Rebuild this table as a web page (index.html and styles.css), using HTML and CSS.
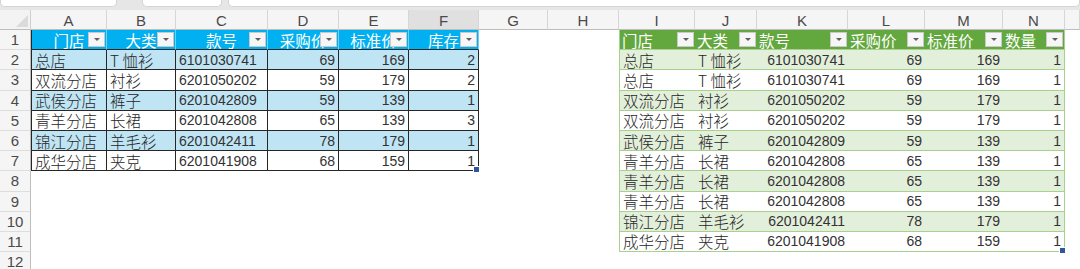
FILE: index.html
```html
<!DOCTYPE html>
<html lang="zh">
<head>
<meta charset="utf-8">
<title>Sheet</title>
<link rel="stylesheet" href="styles.css">
</head>
<body>
<div class="topbar"><div class="tb tb1"></div><div class="tb tb2"></div><div class="tb tb3"></div></div>
<div class="sheet">
  <div class="corner"></div>
  <div class="ch">A</div><div class="ch">B</div><div class="ch">C</div><div class="ch">D</div><div class="ch">E</div><div class="ch sel">F</div><div class="ch">G</div><div class="ch">H</div><div class="ch">I</div><div class="ch">J</div><div class="ch">K</div><div class="ch">L</div><div class="ch">M</div><div class="ch">N</div><div class="ch"></div>
  <div class="rh">1</div><div class="rh">2</div><div class="rh">3</div><div class="rh">4</div><div class="rh">5</div><div class="rh">6</div><div class="rh">7</div><div class="rh">8</div><div class="rh">9</div><div class="rh">10</div><div class="rh">11</div><div class="rh">12</div>

  <div class="tbl blue">
    <div class="row hrow">
      <div class="hd">门店<i class="fb"></i></div>
      <div class="hd">大类<i class="fb"></i></div>
      <div class="hd">款号<i class="fb"></i></div>
      <div class="hd">采购价<i class="fb"></i></div>
      <div class="hd">标准价<i class="fb"></i></div>
      <div class="hd">库存<i class="fb"></i></div>
    </div>
    <div class="row band"><div class="c t">总店</div><div class="c t">T 恤衫</div><div class="c d">6101030741</div><div class="c n">69</div><div class="c n">169</div><div class="c n">2</div></div>
    <div class="row"><div class="c t">双流分店</div><div class="c t">衬衫</div><div class="c d">6201050202</div><div class="c n">59</div><div class="c n">179</div><div class="c n">2</div></div>
    <div class="row band"><div class="c t">武侯分店</div><div class="c t">裤子</div><div class="c d">6201042809</div><div class="c n">59</div><div class="c n">139</div><div class="c n">1</div></div>
    <div class="row"><div class="c t">青羊分店</div><div class="c t">长裙</div><div class="c d">6201042808</div><div class="c n">65</div><div class="c n">139</div><div class="c n">3</div></div>
    <div class="row band"><div class="c t">锦江分店</div><div class="c t">羊毛衫</div><div class="c d">6201042411</div><div class="c n">78</div><div class="c n">179</div><div class="c n">1</div></div>
    <div class="row"><div class="c t">成华分店</div><div class="c t">夹克</div><div class="c d">6201041908</div><div class="c n">68</div><div class="c n">159</div><div class="c n fh">1</div></div>
  </div>

  <div class="tbl green">
    <div class="row hrow">
      <div class="hd">门店<i class="fb"></i></div>
      <div class="hd">大类<i class="fb"></i></div>
      <div class="hd">款号<i class="fb"></i></div>
      <div class="hd">采购价<i class="fb"></i></div>
      <div class="hd">标准价<i class="fb"></i></div>
      <div class="hd">数量<i class="fb"></i></div>
    </div>
    <div class="row band"><div class="c t">总店</div><div class="c t">T 恤衫</div><div class="c n">6101030741</div><div class="c n">69</div><div class="c n">169</div><div class="c n">1</div></div>
    <div class="row"><div class="c t">总店</div><div class="c t">T 恤衫</div><div class="c n">6101030741</div><div class="c n">69</div><div class="c n">169</div><div class="c n">1</div></div>
    <div class="row band"><div class="c t">双流分店</div><div class="c t">衬衫</div><div class="c n">6201050202</div><div class="c n">59</div><div class="c n">179</div><div class="c n">1</div></div>
    <div class="row"><div class="c t">双流分店</div><div class="c t">衬衫</div><div class="c n">6201050202</div><div class="c n">59</div><div class="c n">179</div><div class="c n">1</div></div>
    <div class="row band"><div class="c t">武侯分店</div><div class="c t">裤子</div><div class="c n">6201042809</div><div class="c n">59</div><div class="c n">139</div><div class="c n">1</div></div>
    <div class="row"><div class="c t">青羊分店</div><div class="c t">长裙</div><div class="c n">6201042808</div><div class="c n">65</div><div class="c n">139</div><div class="c n">1</div></div>
    <div class="row band"><div class="c t">青羊分店</div><div class="c t">长裙</div><div class="c n">6201042808</div><div class="c n">65</div><div class="c n">139</div><div class="c n">1</div></div>
    <div class="row"><div class="c t">青羊分店</div><div class="c t">长裙</div><div class="c n">6201042808</div><div class="c n">65</div><div class="c n">139</div><div class="c n">1</div></div>
    <div class="row band"><div class="c t">锦江分店</div><div class="c t">羊毛衫</div><div class="c n">6201042411</div><div class="c n">78</div><div class="c n">179</div><div class="c n">1</div></div>
    <div class="row"><div class="c t">成华分店</div><div class="c t">夹克</div><div class="c n">6201041908</div><div class="c n">68</div><div class="c n">159</div><div class="c n fh">1</div></div>
  </div>
</div>
</body>
</html>
```

FILE: styles.css
```css
html, body {
  margin: 0;
  padding: 0;
}
body {
  width: 1080px;
  height: 269px;
  overflow: hidden;
  background: #ffffff;
  font-family: "Liberation Sans", "Noto Sans CJK SC", sans-serif;
  color: #222222;
}

.topbar {
  height: 10px;
  background: #e6e6e6;
  display: flex;
  align-items: flex-start;
}
.tb {
  height: 7px;
  background: #ffffff;
  border: 1px solid #d4d4d4;
  border-top: none;
  border-radius: 0 0 5px 5px;
  box-sizing: border-box;
}
.tb1 { width: 117px; }
.tb2 { width: 80px; margin-left: 25px; }
.tb3 { flex: 1; margin-left: 6px; }

.sheet {
  display: grid;
  grid-template-columns: 31px 76px 69px 92px 71px 70px 70px 69px 71px 76px 62px 91px 77px 78px 62px 1fr;
  grid-template-rows: 20px repeat(12, 20.2px);
}

.corner {
  grid-row: 1;
  grid-column: 1;
  background: #f3f3f3;
  border-right: 1px solid #cfcfcf;
  border-bottom: 1px solid #bdbdbd;
  box-sizing: border-box;
  position: relative;
}
.corner::after {
  content: "";
  position: absolute;
  right: 2px;
  bottom: 2px;
  border-left: 12px solid transparent;
  border-bottom: 12px solid #dadada;
}

.ch {
  grid-row: 1;
  background: #f5f5f5;
  border-right: 1px solid #d6d6d6;
  border-bottom: 1px solid #bdbdbd;
  box-sizing: border-box;
  display: flex;
  align-items: center;
  justify-content: center;
  font-size: 15px;
  color: #4a4a4a;
  padding-top: 1px;
}
.ch.sel { background: #e0e0e0; }

.rh {
  grid-column: 1;
  background: #f5f5f5;
  border-right: 1px solid #bdbdbd;
  border-bottom: 1px solid #dddddd;
  box-sizing: border-box;
  display: flex;
  align-items: center;
  justify-content: center;
  font-size: 15px;
  color: #4a4a4a;
}

.tbl {
  display: flex;
  flex-direction: column;
  box-sizing: border-box;
}
.row {
  flex: 1;
  display: grid;
  min-height: 0;
}
.c {
  display: flex;
  align-items: center;
  padding: 0 3px;
  white-space: nowrap;
  overflow: hidden;
  box-sizing: border-box;
  min-width: 0;
}
.t {
  font-family: "Noto Sans CJK SC", sans-serif;
  font-size: 15.5px;
  font-weight: 300;
  color: #262626;
}
.d {
  font-size: 14px;
  color: #333333;
}
.n {
  justify-content: flex-end;
  font-size: 14px;
  color: #333333;
}
.hd {
  position: relative;
  display: flex;
  align-items: center;
  white-space: nowrap;
  overflow: hidden;
  box-sizing: border-box;
  font-family: "Noto Sans CJK SC", sans-serif;
  font-size: 15.5px;
  color: #ffffff;
}
.fb {
  position: absolute;
  right: 1px;
  top: 50%;
  margin-top: -8px;
  width: 17px;
  height: 15px;
  background: #f6f6f6;
  border: 1px solid #c9c9c9;
  box-sizing: border-box;
}
.fb::after {
  content: "";
  position: absolute;
  left: 5px;
  top: 5px;
  border-left: 3px solid transparent;
  border-right: 3px solid transparent;
  border-top: 3px solid #5f5f5f;
}
.fh {
  position: relative;
  overflow: visible;
}
.fh::after {
  content: "";
  position: absolute;
  right: -2px;
  bottom: -3px;
  width: 5px;
  height: 5px;
  background: #2f55a0;
  border: 1px solid #ffffff;
}

/* blue table */
.blue {
  grid-column: 2 / 8;
  grid-row: 2 / 9;
  border-left: 1px solid #262626;
}
.blue .row {
  grid-template-columns: 75px 69px 92px 71px 70px 70px;
}
.blue .row > div {
  border-right: 1px solid #262626;
  border-bottom: 1px solid #262626;
}
.blue .hrow > .hd {
  background: #00b0f0;
  justify-content: center;
  border-right-color: #6fd0f4;
}
.blue .band > div {
  background: #bfe4f4;
}

/* green table */
.green {
  grid-column: 10 / 16;
  grid-row: 2 / 13;
  border-left: 1px solid #a9d08e;
  border-right: 1px solid #a9d08e;
}
.green .row {
  grid-template-columns: 75px 62px 91px 77px 78px 61px;
  border-bottom: 1px solid #a9d08e;
}
.green .hrow {
  background: #62a83e;
}
.green .hrow > .hd {
  justify-content: flex-start;
  padding-left: 2px;
}
.green .band {
  background: #e2efda;
}
```
